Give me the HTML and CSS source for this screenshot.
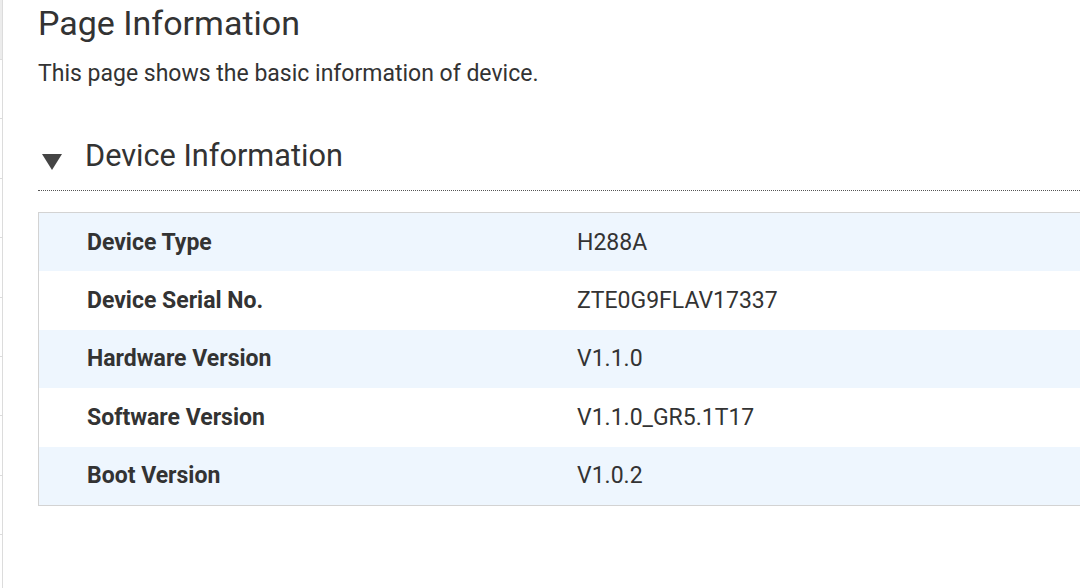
FILE: index.html
```html
<!DOCTYPE html>
<html>
<head>
<meta charset="utf-8">
<link rel="stylesheet" href="styles.css">
</head>
<body>
<div class="layout">
  <nav class="side">
    <div class="side-item active"></div>
    <div class="side-item"></div>
    <div class="side-item"></div>
    <div class="side-item"></div>
    <div class="side-item"></div>
    <div class="side-item"></div>
    <div class="side-item"></div>
    <div class="side-item"></div>
    <div class="side-item"></div>
    <div class="side-item"></div>
  </nav>
  <main class="main">
    <h1 class="title">Page Information</h1>
    <p class="desc">This page shows the basic information of device.</p>
    <div class="section-head">
      <span class="tri"></span>
      <h2 class="section-title">Device Information</h2>
    </div>
    <div class="info-table">
      <div class="row alt"><div class="label">Device Type</div><div class="value">H288A</div></div>
      <div class="row"><div class="label">Device Serial No.</div><div class="value">ZTE0G9FLAV17337</div></div>
      <div class="row alt"><div class="label">Hardware Version</div><div class="value">V1.1.0</div></div>
      <div class="row"><div class="label">Software Version</div><div class="value">V1.1.0_GR5.1T17</div></div>
      <div class="row alt"><div class="label">Boot Version</div><div class="value">V1.0.2</div></div>
    </div>
  </main>
</div>
</body>
</html>
```
FILE: styles.css
```css
html, body {
  margin: 0;
  padding: 0;
  background: #ffffff;
  overflow: hidden;
}
body {
  width: 1080px;
  height: 588px;
  font-family: Roboto, "Liberation Sans", sans-serif;
  color: #333333;
}
.layout {
  display: flex;
  height: 588px;
}
.side {
  flex: 0 0 2px;
  width: 2px;
  border-right: 1px solid #dcdcdc;
  display: flex;
  flex-direction: column;
}
.side-item {
  height: 58.4px;
  flex: 0 0 auto;
  border-bottom: 1px solid #dcdcdc;
}
.side-item.active {
  height: 59px;
  background: #ececec;
}
.main {
  flex: 0 0 auto;
  width: 1100px;
  padding-left: 35px;
}
.title {
  margin: 3px 0 0;
  font-size: 34px;
  font-weight: 400;
  line-height: 40px;
  color: #333;
}
.desc {
  margin: 17px 0 0;
  font-size: 23px;
  line-height: 27px;
  color: #333;
}
.section-head {
  display: flex;
  align-items: flex-start;
  margin-top: 51px;
  padding-bottom: 16px;
  border-bottom: 1px dotted #555;
}
.tri {
  flex: 0 0 auto;
  width: 0;
  height: 0;
  margin-left: 4px;
  margin-right: 23px;
  margin-top: 16px;
  border-left: 10px solid transparent;
  border-right: 10px solid transparent;
  border-top: 16px solid #444;
}
.section-title {
  margin: 0;
  font-size: 30.7px;
  font-weight: 400;
  line-height: 36px;
}
.info-table {
  margin-top: 21px;
  border: 1px solid #d3d3d3;
  border-right: none;
}
.row {
  display: flex;
  align-items: center;
  height: 58.4px;
  font-size: 23px;
}
.row.alt {
  background: #eef6fe;
}
.label {
  width: 490px;
  padding-left: 48px;
  font-weight: 700;
}
.value {
  font-weight: 400;
}
```
